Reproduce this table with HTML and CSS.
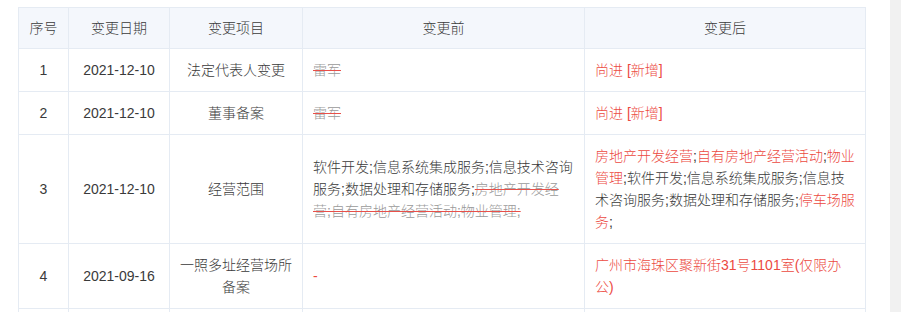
FILE: index.html
```html
<!DOCTYPE html>
<html lang="zh-CN">
<head>
<meta charset="utf-8">
<title>变更记录</title>
<link rel="stylesheet" href="styles.css">
</head>
<body>
<div class="page">
  <main class="content">
    <table class="change-table">
      <colgroup>
        <col class="c-no">
        <col class="c-date">
        <col class="c-item">
        <col class="c-before">
        <col class="c-after">
      </colgroup>
      <thead>
        <tr>
          <th>序号</th>
          <th>变更日期</th>
          <th>变更项目</th>
          <th>变更前</th>
          <th>变更后</th>
        </tr>
      </thead>
      <tbody>
        <tr>
          <td class="center">1</td>
          <td class="center">2021-12-10</td>
          <td class="center">法定代表人变更</td>
          <td class="text"><span class="del">雷军</span></td>
          <td class="text"><span class="add">尚进 [新增]</span></td>
        </tr>
        <tr>
          <td class="center">2</td>
          <td class="center">2021-12-10</td>
          <td class="center">董事备案</td>
          <td class="text"><span class="del">雷军</span></td>
          <td class="text"><span class="add">尚进 [新增]</span></td>
        </tr>
        <tr>
          <td class="center">3</td>
          <td class="center">2021-12-10</td>
          <td class="center">经营范围</td>
          <td class="text">软件开发;信息系统集成服务;信息技术咨询服务;数据处理和存储服务;<span class="del">房地产开发经营;自有房地产经营活动;物业管理;</span></td>
          <td class="text"><span class="add">房地产开发经营</span>;<span class="add">自有房地产经营活动</span>;<span class="add">物业管理</span>;软件开发;信息系统集成服务;信息技术咨询服务;数据处理和存储服务;<span class="add">停车场服务</span>;</td>
        </tr>
        <tr>
          <td class="center">4</td>
          <td class="center">2021-09-16</td>
          <td class="center">一照多址经营场所备案</td>
          <td class="text"><span class="add">-</span></td>
          <td class="text"><span class="add">广州市海珠区聚新街31号1101室(仅限办公)</span></td>
        </tr>
        <tr class="cut">
          <td></td>
          <td></td>
          <td></td>
          <td></td>
          <td></td>
        </tr>
      </tbody>
    </table>
  </main>
  <div class="scrollbar"></div>
</div>
</body>
</html>
```

FILE: styles.css
```css
html, body {
  margin: 0;
  padding: 0;
  background: #ffffff;
}

body {
  font-family: "Liberation Sans", "Noto Sans CJK SC", sans-serif;
  font-size: 14px;
  font-weight: 300;
  color: #3a3a3a;
  height: 312px;
  overflow: hidden;
}

.page {
  display: flex;
  height: 312px;
}

.content {
  flex: 1;
  padding: 7px 25px 0 18px;
  overflow: hidden;
}

.scrollbar {
  width: 11px;
  flex: none;
  background: #f1f1f1;
}

.change-table {
  width: 847px;
  table-layout: fixed;
  border-collapse: collapse;
  line-height: 22px;
}

.c-no { width: 50px; }
.c-date { width: 101px; }
.c-item { width: 133px; }
.c-before { width: 282px; }
.c-after { width: 281px; }

.change-table th,
.change-table td {
  border: 1px solid #e5ebf3;
  padding: 10px 10px;
  vertical-align: middle;
}

.change-table th {
  background: #f4f7fc;
  font-weight: 300;
  text-align: center;
  padding: 9px 10px;
}

.center {
  text-align: center;
}

.text {
  text-align: left;
  word-break: break-all;
}

.del {
  color: #9a9a9a;
  text-decoration: line-through;
  text-decoration-color: #e8504a;
}

.add {
  color: #ec4a3f;
}

.cut td {
  height: 40px;
}
```
